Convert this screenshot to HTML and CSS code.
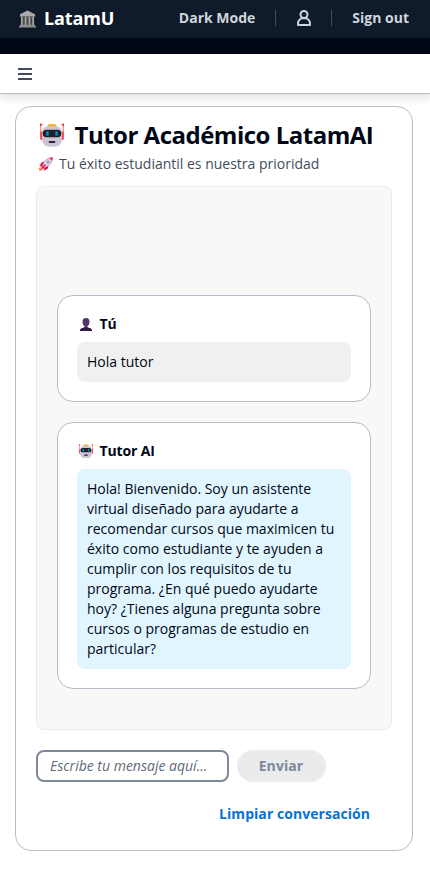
FILE: index.html
```html
<!DOCTYPE html>
<html lang="es">
<head>
<meta charset="utf-8">
<title>LatamU</title>
<link rel="stylesheet" href="styles.css">
</head>
<body>
<svg class="defs" aria-hidden="true">
  <symbol id="robot" viewBox="0 0 24 24">
    <path d="M.8 1.500v14M23.200 1.500v14" stroke="#f8606a" stroke-width="1"/>
    <path d="M1.200 9.500v6.500M22.800 9.500v6.500" stroke="#f8424e" stroke-width="1.800" stroke-linecap="round"/>
    <circle cx="1" cy="1.600" r="1.200" fill="#f8312f"/><circle cx="23" cy="1.600" r="1.200" fill="#f8312f"/>
    <path d="M7.500 4V3q0-2 2-2h5q2 0 2 2v1z" fill="#ffb02e"/>
    <path d="M8.500 3.300h7q6.500 0 6.500 6.500v6q0 8-8 8h-4q-8 0-8-8v-6q0-6.500 6.500-6.500z" fill="#cdc4d6"/>
    <rect x="2.700" y="6.700" width="18.600" height="7.600" rx="3.800" fill="#212121"/>
    <rect x="6" y="8.200" width="2.800" height="4.600" rx="1.300" fill="#0088d8"/><rect x="15.200" y="8.200" width="2.800" height="4.600" rx="1.300" fill="#0088d8"/>
    <rect x="8.700" y="18" width="6.600" height="2" rx="1" fill="#321b41"/>
  </symbol>
</svg>
<header class="topbar">
  <div class="brand">
    <svg class="bank" viewBox="0 0 18 18"><path d="M9 0l8 4v2.500H1V4z" fill="#aaa"/><path d="M2 6.500h14V16H2z" fill="#4b4b4b"/><path d="M3 6.500v9M7 6.500v9M11 6.500v9M15 6.500v9" stroke="#aaa" stroke-width="1.700"/><path d="M1 15h16v1.300h1V18H0v-1.700h1z" fill="#8f8f8f"/></svg>
    <span>LatamU</span>
  </div>
  <nav class="tools">
    <span>Dark Mode</span><i class="sep"></i>
    <svg class="user" viewBox="0 0 16 16"><circle cx="8" cy="4.500" r="3.500"/><path d="M8 8c-3.300 0-6 2.200-6 5.500V15h12v-1.500C14 10.200 11.300 8 8 8z"/></svg>
    <i class="sep"></i><span>Sign out</span>
  </nav>
</header>
<div class="strip"></div>
<div class="menubar"><svg class="burger" viewBox="0 0 14 12"><path d="M0 1h14M0 6h14M0 11h14"/></svg></div>
<main class="panel">
  <h1><svg class="bot-lg"><use href="#robot"/></svg>Tutor Académico LatamAI</h1>
  <p class="subtitle"><svg class="rocket" viewBox="0 0 14 14"><path d="M2 10L0 11l.2 2.800L3 13.500l1.500-1.500z" fill="#ff8257"/><path d="M5.500 4.500L2.500 5.500.500 9.500l3.500-1zM9.500 8.500L8.800 11.500 4.800 13.700l.8-3.500z" fill="#ca0b4a"/><path d="M3.300 9C4.500 4.200 8 .9 13.600.4 13.200 6 9.800 9.500 5 10.700z" fill="#e1d8ec" stroke="#ef5a82" stroke-width=".7"/><path d="M10.200.9c1-.3 2.200-.5 3.400-.5-.1 1.200-.2 2.300-.6 3.300zM3.100 8.500l2.500 2.500-1.500 1-2-2z" fill="#f92f60"/><circle cx="9" cy="5" r="1.300" fill="#6bc7e8" stroke="#9b9b9b" stroke-width=".6"/><path d="M3.500 10.500l3-3" stroke="#ca0b4a" stroke-width="1.200"/></svg>Tu éxito estudiantil es nuestra prioridad</p>
  <section class="chat">
    <article class="card">
      <h2><svg class="bust" viewBox="0 0 12 13"><path d="M0 13q0-2.600 3-3l1.500-.7V8Q2.600 7 2.500 4.300 2.300 0 6 0t3.500 4.300Q9.400 7 7.500 8v1.300L9 10q3 .4 3 3z" fill="#533566"/><path d="M0 13q0-2.600 3-3l1.500-.7q1.500 1 3 0L9 10q3 .4 3 3z" fill="#321b41"/></svg>Tú</h2>
      <div class="bubble">Hola tutor</div>
    </article>
    <article class="card">
      <h2><svg class="bot-sm"><use href="#robot"/></svg>Tutor AI</h2>
      <div class="bubble reply">Hola! Bienvenido. Soy un asistente virtual diseñado para ayudarte a recomendar cursos que maximicen tu éxito como estudiante y te ayuden a cumplir con los requisitos de tu programa. ¿En qué puedo ayudarte hoy? ¿Tienes alguna pregunta sobre cursos o programas de estudio en particular?</div>
    </article>
  </section>
  <form class="composer">
    <input type="text" placeholder="Escribe tu mensaje aquí...">
    <button type="button" disabled>Enviar</button>
  </form>
  <div class="clear"><a>Limpiar conversación</a></div>
</main>
</body>
</html>
```
FILE: styles.css
```css
* { box-sizing: border-box; }
body { margin: 0; background: #fff; color: #000716; font: 14px/20px "Open Sans", sans-serif; }
svg { display: block; flex: none; overflow: visible; }
.defs { position: absolute; width: 0; height: 0; }
.topbar { display: flex; align-items: center; justify-content: space-between; height: 38px; padding: 0 21px 2px 19px; background: #0f1b2a; color: #d1d5db; font-weight: 700; }
.brand { display: flex; align-items: center; gap: 8px; font-size: 18px; color: #fff; letter-spacing: -.15px; }
.bank { width: 17px; height: 18px; margin-top: 2px; }
.tools { display: flex; align-items: center; }
.sep { width: 1px; height: 16px; margin: 0 19px 0 20px; background: #414d5c; }
.sep:last-of-type { margin: 0 20px 0 18px; }
.user { width: 16px; height: 16px; margin: 0 1px; fill: none; stroke: #d1d5db; stroke-width: 2; stroke-linejoin: round; }
.strip { height: 16px; background: #000716; }
.menubar { height: 40px; padding: 14px 18px; border-bottom: 1px solid #b6bec9; box-shadow: 0 4px 8px 1px rgba(0, 7, 22, .1); }
.burger { width: 14px; height: 12px; stroke: #414d5c; stroke-width: 2; }
.panel { width: 398px; height: 745px; margin: 12px 0 0 15px; padding: 13px 20px 0; border: 1px solid #b6bec9; border-radius: 16px; background: #fff; }
h1 { display: flex; align-items: center; height: 30px; margin: 0; gap: 10.5px; font-size: 24px; line-height: 30px; letter-spacing: -.5px; white-space: nowrap; }
.bot-lg { width: 24px; height: 24px; margin-left: 4px; }
.subtitle { display: flex; align-items: center; gap: 6px; margin: 4px 0 0; padding-left: 2px; color: #414d5c; line-height: 20px; white-space: nowrap; }
.rocket { width: 14px; height: 14px; margin-left: 1px; }
.chat { display: flex; flex-direction: column; justify-content: flex-end; gap: 20px; height: 544px; margin-top: 12px; padding: 20px 20px 40px; border: 1px solid #e9ebed; border-radius: 8px; background: #f8f8f8; }
.card { padding: 18px 19px 19px; border: 1px solid #b6bec9; border-radius: 16px; background: #fff; }
h2 { display: flex; align-items: center; height: 20px; margin: 0 0 8px; font-size: 14px; line-height: 20px; letter-spacing: -.15px; }
.bust { width: 12px; height: 13px; margin: 1px 7.5px 0 3px; }
.bot-sm { width: 14px; height: 14px; margin: 0 6.5px 0 2px; }
.bubble { padding: 10px; border-radius: 8px; background: #f0f0f0; }
.reply { background: #e1f5fe; }
.composer { display: flex; gap: 8px; margin-top: 20px; }
input { width: 193px; height: 32px; padding: 0 12px 2px; border: 2px solid #7d8998; border-radius: 8px; background: #fff; font: 14px "Open Sans", sans-serif; }
input::placeholder { color: #5f6b7a; font-style: italic; opacity: 1; }
button { width: 89px; height: 32px; padding: 0 1px 2px 0; border: 0; border-radius: 16px; background: #e9ebed; color: #7d8998; font: 700 14px "Open Sans", sans-serif; letter-spacing: .1px; }
.clear { margin-top: 22px; padding-right: 22px; text-align: right; color: #0972d3; font-weight: 700; letter-spacing: .05px; }
```
